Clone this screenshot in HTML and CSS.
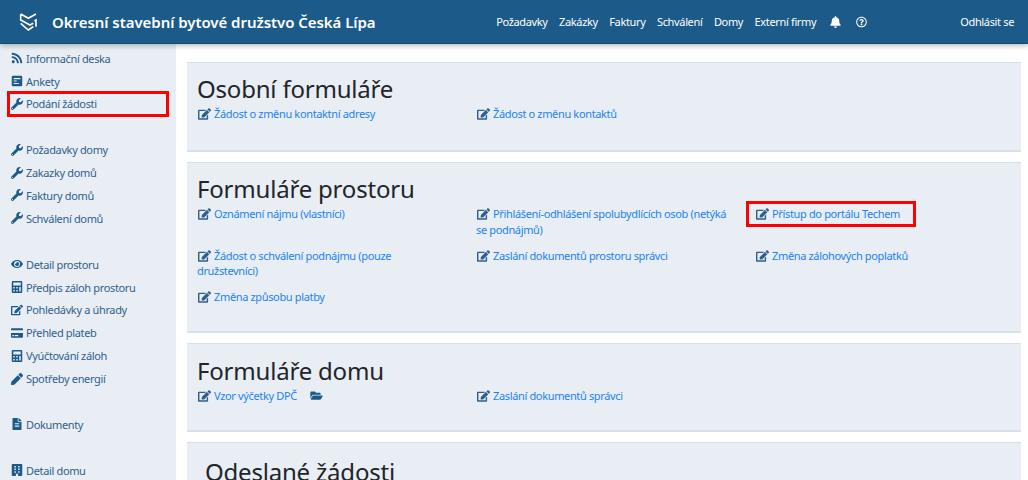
FILE: index.html
```html
<!DOCTYPE html>
<html lang="cs">
<head>
<meta charset="utf-8">
<title>Okresní stavební bytové družstvo Česká Lípa</title>
<link rel="stylesheet" href="styles.css">
</head>
<body>
<svg class="defs" width="0" height="0" aria-hidden="true">
  <symbol id="i-rss" viewBox="0 0 448 512"><path d="M128.081 415.959c0 35.369-28.672 64.041-64.041 64.041S0 451.328 0 415.959s28.672-64.041 64.041-64.041 64.04 28.673 64.04 64.041zm175.66 47.25c-8.354-154.6-132.185-278.587-286.95-286.95C7.656 175.765 0 183.105 0 192.253v48.069c0 8.415 6.49 15.472 14.887 16.018 111.832 7.284 201.473 96.702 208.772 208.772.547 8.397 7.604 14.887 16.018 14.887h48.069c9.149.001 16.489-7.655 15.995-16.79zm144.249.288C439.596 229.677 251.465 40.445 16.503 32.01 7.473 31.686 0 38.981 0 48.016v48.068c0 8.625 6.835 15.645 15.453 15.999 191.179 7.839 344.627 161.316 352.465 352.465.353 8.618 7.373 15.453 15.999 15.453h48.068c9.034-.001 16.329-7.474 16.005-16.504z"/></symbol>
  <symbol id="i-poll" viewBox="0 0 448 512"><path fill-rule="evenodd" d="M48 32h352a48 48 0 0 1 48 48v352a48 48 0 0 1-48 48H48a48 48 0 0 1-48-48V80a48 48 0 0 1 48-48zM80 128v48h288v-48zM80 232v48h130v-48zM80 336v48h220v-48z"/></symbol>
  <symbol id="i-wrench" viewBox="0 0 512 512"><path d="M507.73 109.1c-2.24-9.03-13.54-12.09-20.12-5.51l-74.36 74.36-67.88-11.31-11.31-67.88 74.36-74.36c6.62-6.62 3.43-17.9-5.66-20.16-47.38-11.74-99.55.91-136.58 37.93-39.64 39.64-50.55 97.1-34.05 147.2L18.74 402.76c-24.99 24.99-24.99 65.51 0 90.5 24.99 24.99 65.51 24.99 90.5 0l213.21-213.21c50.12 16.71 107.47 5.68 147.37-34.22 37.07-37.07 49.7-89.32 37.91-136.73zM64 472c-13.25 0-24-10.75-24-24 0-13.26 10.75-24 24-24s24 10.74 24 24c0 13.25-10.75 24-24 24z"/></symbol>
  <symbol id="i-eye" viewBox="0 0 576 512"><path d="M572.52 241.4C518.29 135.59 410.93 64 288 64S57.68 135.64 3.48 241.41a32.35 32.35 0 0 0 0 29.19C57.71 376.41 165.07 448 288 448s230.32-71.64 284.52-177.41a32.35 32.35 0 0 0 0-29.19zM288 400a144 144 0 1 1 144-144 143.93 143.93 0 0 1-144 144zm0-240a95.31 95.31 0 0 0-25.31 3.79 47.85 47.85 0 0 1-66.9 66.9A95.78 95.78 0 1 0 288 160z"/></symbol>
  <symbol id="i-calc" viewBox="0 0 448 512"><path fill-rule="evenodd" d="M48 0h352a48 48 0 0 1 48 48v416a48 48 0 0 1-48 48H48a48 48 0 0 1-48-48V48A48 48 0 0 1 48 0zM64 64v128h320V64zM64 256v64h64v-64zM192 256v64h64v-64zM320 256v192h64V256zM64 384v64h64v-64zM192 384v64h64v-64z"/></symbol>
  <symbol id="i-edit" viewBox="0 0 576 512"><path d="M402.6 83.2l90.2 90.2c3.8 3.8 3.8 10 0 13.8L274.4 405.6l-92.8 10.3c-12.4 1.4-22.9-9.1-21.5-21.5l10.3-92.8L388.8 83.2c3.8-3.8 10-3.8 13.8 0zm162-22.9l-48.8-48.8c-15.2-15.2-39.9-15.2-55.2 0l-35.4 35.4c-3.8 3.8-3.8 10 0 13.8l90.2 90.2c3.8 3.8 10 3.8 13.8 0l35.4-35.4c15.2-15.3 15.2-40 0-55.2zM384 346.2V448H64V128h229.8c3.2 0 6.2-1.3 8.5-3.5l40-40c7.6-7.6 2.2-20.5-8.5-20.5H48C21.5 64 0 85.5 0 112v352c0 26.5 21.5 48 48 48h352c26.5 0 48-21.5 48-48V306.2c0-10.7-12.9-16-20.5-8.5l-40 40c-2.2 2.3-3.5 5.3-3.5 8.5z"/></symbol>
  <symbol id="i-card" viewBox="0 0 576 512"><path d="M0 432a48 48 0 0 0 48 48h480a48 48 0 0 0 48-48V256H0zm192-68a12 12 0 0 1 12-12h136a12 12 0 0 1 12 12v40a12 12 0 0 1-12 12H204a12 12 0 0 1-12-12zm-128 0a12 12 0 0 1 12-12h72a12 12 0 0 1 12 12v40a12 12 0 0 1-12 12H76a12 12 0 0 1-12-12zM576 80v48H0V80a48 48 0 0 1 48-48h480a48 48 0 0 1 48 48z"/></symbol>
  <symbol id="i-pen" viewBox="0 0 512 512"><path d="M290.74 93.24l128.02 128.02-277.99 277.99-114.14 12.6C11.35 513.54-1.56 500.62.14 485.34l12.7-114.22 277.9-277.88zm207.2-19.06l-60.11-60.11c-18.75-18.75-49.16-18.75-67.91 0l-56.55 56.55 128.02 128.02 56.55-56.55c18.75-18.76 18.75-49.16 0-67.91z"/></symbol>
  <symbol id="i-file" viewBox="0 0 384 512"><path d="M224 136V0H24C10.7 0 0 10.7 0 24v464c0 13.3 10.7 24 24 24h336c13.3 0 24-10.7 24-24V160H248c-13.2 0-24-10.800-24-24zm64 236c0 6.600-5.400 12-12 12H108c-6.600 0-12-5.400-12-12v-8c0-6.600 5.400-12 12-12h168c6.600 0 12 5.400 12 12v8zm0-64c0 6.600-5.400 12-12 12H108c-6.600 0-12-5.400-12-12v-8c0-6.600 5.400-12 12-12h168c6.600 0 12 5.400 12 12v8zm0-72v8c0 6.600-5.400 12-12 12H108c-6.600 0-12-5.400-12-12v-8c0-6.600 5.400-12 12-12h168c6.600 0 12 5.400 12 12zm96-114.100v6.100H256V0h6.100c6.400 0 12.500 2.500 17 7l97.900 98c4.500 4.500 7 10.600 7 16.900z"/></symbol>
  <symbol id="i-building" viewBox="0 0 448 512"><path fill-rule="evenodd" d="M24 0h400a24 24 0 0 1 24 24v464h-24v24H272v-96h-96v96H24v-24H0V24A24 24 0 0 1 24 0zM112 80v64h64V80zM272 80v64h64V80zM112 192v64h64v-64zM272 192v64h64v-64zM112 304v64h64v-64zM272 304v64h64v-64z"/></symbol>
  <symbol id="i-bell" viewBox="0 0 448 512"><path d="M224 512c35.32 0 63.97-28.65 63.97-64H160.03c0 35.35 28.65 64 63.97 64zm215.39-149.71c-19.32-20.76-55.47-51.99-55.47-154.29 0-77.7-54.48-139.9-127.94-155.16V32c0-17.67-14.32-32-31.98-32s-31.98 14.33-31.98 32v20.84C118.56 68.1 64.08 130.3 64.08 208c0 102.3-36.15 133.53-55.47 154.29-6 6.45-8.66 14.16-8.61 21.71.11 16.4 12.98 32 32.1 32h383.8c19.12 0 32-15.6 32.1-32 .05-7.55-2.61-15.27-8.61-21.71z"/></symbol>
  <symbol id="i-help" viewBox="0 0 512 512"><path d="M256 8C119.043 8 8 119.083 8 256c0 136.997 111.043 248 248 248s248-111.003 248-248C504 119.083 392.957 8 256 8zm0 448c-110.532 0-200-89.431-200-200 0-110.495 89.472-200 200-200 110.491 0 200 89.471 200 200 0 110.53-89.431 200-200 200zm107.244-255.2c0 67.052-72.421 68.084-72.421 92.863V300c0 6.627-5.373 12-12 12h-45.647c-6.627 0-12-5.373-12-12v-8.659c0-35.745 27.1-50.034 47.579-61.516 17.561-9.845 28.324-16.541 28.324-29.579 0-17.246-21.999-28.693-39.784-28.693-23.189 0-33.894 10.977-48.942 29.969-4.057 5.12-11.46 6.071-16.666 2.124l-27.824-21.098c-5.107-3.872-6.251-11.066-2.644-16.363C184.846 131.491 214.94 112 261.794 112c49.071 0 101.45 38.304 101.45 88.8zM298 368c0 23.159-18.841 42-42 42s-42-18.841-42-42 18.841-42 42-42 42 18.841 42 42z"/></symbol>
  <symbol id="i-folder" viewBox="0 0 576 512"><path d="M572.694 292.093L500.27 416.248A63.997 63.997 0 0 1 444.989 448H45.025c-18.523 0-30.064-20.093-20.731-36.093l72.424-124.155A64 64 0 0 1 152 256h399.964c18.523 0 30.064 20.093 20.73 36.093zM152 224h328v-48c0-26.51-21.49-48-48-48H272l-64-64H48C21.49 64 0 85.49 0 112v278.046l69.077-118.418C86.214 242.25 117.989 224 152 224z"/></symbol>
</svg>

<header class="topbar">
  <a class="brand" href="#">
    <svg class="logo" viewBox="0 0 20 20" aria-hidden="true"><path d="M1.700 2 9.300 6.300 17 2M1.700 2v6L11 13l3.300-1.700M1.700 11.300 9.300 18l5-3.300M15.500 9 17 8v6.700" fill="none" stroke="#fff" stroke-width="1.600"/></svg>
    <span class="brand-name">Okresní stavební bytové družstvo Česká Lípa</span>
  </a>
  <nav class="topnav">
    <a href="#">Požadavky</a>
    <a href="#">Zakázky</a>
    <a href="#">Faktury</a>
    <a href="#">Schválení</a>
    <a href="#">Domy</a>
    <a href="#">Externí firmy</a>
    <a href="#" aria-label="Upozornění"><svg class="nav-icon"><use href="#i-bell"/></svg></a>
    <a href="#" aria-label="Nápověda"><svg class="nav-icon"><use href="#i-help"/></svg></a>
  </nav>
  <a class="logout" href="#">Odhlásit se</a>
</header>

<div class="page">
  <aside class="sidebar">
    <ul class="side-list">
      <li><a href="#"><svg class="ico"><use href="#i-rss"/></svg>Informační deska</a></li>
      <li><a href="#"><svg class="ico"><use href="#i-poll"/></svg>Ankety</a></li>
      <li class="marked"><a href="#"><svg class="ico"><use href="#i-wrench"/></svg>Podání žádosti</a></li>
      <li class="gap"></li>
      <li><a href="#"><svg class="ico"><use href="#i-wrench"/></svg>Požadavky domy</a></li>
      <li><a href="#"><svg class="ico"><use href="#i-wrench"/></svg>Zakazky domů</a></li>
      <li><a href="#"><svg class="ico"><use href="#i-wrench"/></svg>Faktury domů</a></li>
      <li><a href="#"><svg class="ico"><use href="#i-wrench"/></svg>Schválení domů</a></li>
      <li class="gap"></li>
      <li><a href="#"><svg class="ico"><use href="#i-eye"/></svg>Detail prostoru</a></li>
      <li><a href="#"><svg class="ico"><use href="#i-calc"/></svg>Předpis záloh prostoru</a></li>
      <li><a href="#"><svg class="ico"><use href="#i-edit"/></svg>Pohledávky a úhrady</a></li>
      <li><a href="#"><svg class="ico"><use href="#i-card"/></svg>Přehled plateb</a></li>
      <li><a href="#"><svg class="ico"><use href="#i-calc"/></svg>Vyúčtování záloh</a></li>
      <li><a href="#"><svg class="ico"><use href="#i-pen"/></svg>Spotřeby energií</a></li>
      <li class="gap"></li>
      <li><a href="#"><svg class="ico"><use href="#i-file"/></svg>Dokumenty</a></li>
      <li class="gap"></li>
      <li><a href="#"><svg class="ico"><use href="#i-building"/></svg>Detail domu</a></li>
    </ul>
  </aside>

  <main class="content">
    <section class="panel panel-a">
      <h2>Osobní formuláře</h2>
      <div class="forms">
        <div class="form"><a href="#"><svg class="ico-edit"><use href="#i-edit"/></svg>Žádost o změnu kontaktní adresy</a></div>
        <div class="form"><a href="#"><svg class="ico-edit"><use href="#i-edit"/></svg>Žádost o změnu kontaktů</a></div>
      </div>
    </section>

    <section class="panel panel-b">
      <h2>Formuláře prostoru</h2>
      <div class="forms">
        <div class="form"><a href="#"><svg class="ico-edit"><use href="#i-edit"/></svg>Oznámení nájmu (vlastníci)</a></div>
        <div class="form"><a href="#"><svg class="ico-edit"><use href="#i-edit"/></svg>Přihlášení-odhlášení spolubydlících osob (netýká se podnájmů)</a></div>
        <div class="form form-marked"><a href="#"><svg class="ico-edit"><use href="#i-edit"/></svg>Přístup do portálu Techem</a></div>
        <div class="form"><a href="#"><svg class="ico-edit"><use href="#i-edit"/></svg>Žádost o schválení podnájmu (pouze družstevníci)</a></div>
        <div class="form"><a href="#"><svg class="ico-edit"><use href="#i-edit"/></svg>Zaslání dokumentů prostoru správci</a></div>
        <div class="form"><a href="#"><svg class="ico-edit"><use href="#i-edit"/></svg>Změna zálohových poplatků</a></div>
        <div class="form"><a href="#"><svg class="ico-edit"><use href="#i-edit"/></svg>Změna způsobu platby</a></div>
      </div>
    </section>

    <section class="panel panel-c">
      <h2>Formuláře domu</h2>
      <div class="forms">
        <div class="form"><a href="#"><svg class="ico-edit"><use href="#i-edit"/></svg>Vzor výčetky DPČ</a><svg class="ico-folder"><use href="#i-folder"/></svg></div>
        <div class="form"><a href="#"><svg class="ico-edit"><use href="#i-edit"/></svg>Zaslání dokumentů správci</a></div>
      </div>
    </section>

    <section class="panel panel-d">
      <h2>Odeslané žádosti</h2>
    </section>
  </main>
</div>
</body>
</html>
```
FILE: styles.css
```css
*, *::after { box-sizing: border-box; }
html, body { margin: 0; height: 480px; overflow: hidden; }
body { font-family: "Noto Sans", "Open Sans", sans-serif; font-size: 11px; letter-spacing: -.35px; color: #212529; background: #fff; }
a { text-decoration: none; color: inherit; }
.defs { position: absolute; }

.topbar {
  position: relative; z-index: 2;
  display: flex; align-items: center;
  height: 44px; padding: 0 14px 0 19px;
  background: #1b5a89;
  border-bottom: 1px solid #154a72;
  box-shadow: 0 2px 5px rgba(0,0,0,.25);
  color: #fff;
}
.brand { display: flex; align-items: center; gap: 13px; }
.logo { width: 20px; height: 20px; }
.brand-name { font-size: 15px; font-weight: 600; letter-spacing: -.05px; }
.topnav { display: flex; align-items: center; gap: 11.500px; margin-left: auto; margin-right: 91px; }
.nav-icon { display: block; width: 11px; height: 12px; fill: #fff; margin: 0 2px; }
.topnav a:first-child { margin-left: 0; }

.page { display: flex; height: 436px; }
.sidebar { width: 176px; flex: none; background: #e9eef5; padding-top: 2.700px; }
.side-list { list-style: none; margin: 0; padding: 0 0 0 11px; }
.side-list li { height: 22.900px; display: flex; align-items: center; color: #2f5f8a; }
.side-list a { display: flex; align-items: center; }
.ico { width: 12px; height: 12px; fill: #1b5a89; margin-right: 3px; }
.marked { position: relative; }
.marked::after { content: ""; position: absolute; left: -4px; top: -1px; width: 162px; height: 26px; border: 3px solid #f00; }

.content { flex: 1; padding: 18px 7px 0 11px; min-width: 0; }
.panel { background: #e9eef5; border-top: 1px solid #d7e1ea; border-bottom: 2px solid #d7e1ea; padding: 9px 10px 0; margin-bottom: 10px; }
.panel-a { height: 90px; }
.panel-b { height: 171px; }
.panel-c { height: 89px; padding-top: 10px; }
.panel-d { height: 60px; padding: 12px 10px 0 18px; margin-bottom: 0; }
.panel h2 { margin: 0; font-size: 24px; font-weight: 400; line-height: 33px; letter-spacing: -.2px; color: #212529; }
.forms { display: grid; grid-template-columns: repeat(3, 279px); margin-top: 1px; }
.form { padding: 0 24px 10.500px 0; color: #1a82f5; line-height: 15.500px; min-height: 26px; position: relative; }
.ico-edit { display: inline-block; width: 13px; height: 12px; fill: #2f5f8a; margin: 0 3px 0 1px; vertical-align: -2px; }
.ico-folder { display: inline-block; width: 13px; height: 11px; fill: #1b5a89; margin-left: 13px; vertical-align: -1px; }
.form-marked::after { content: ""; position: absolute; left: -9px; top: -5px; width: 170px; height: 26px; border: 3px solid #f00; }
```
